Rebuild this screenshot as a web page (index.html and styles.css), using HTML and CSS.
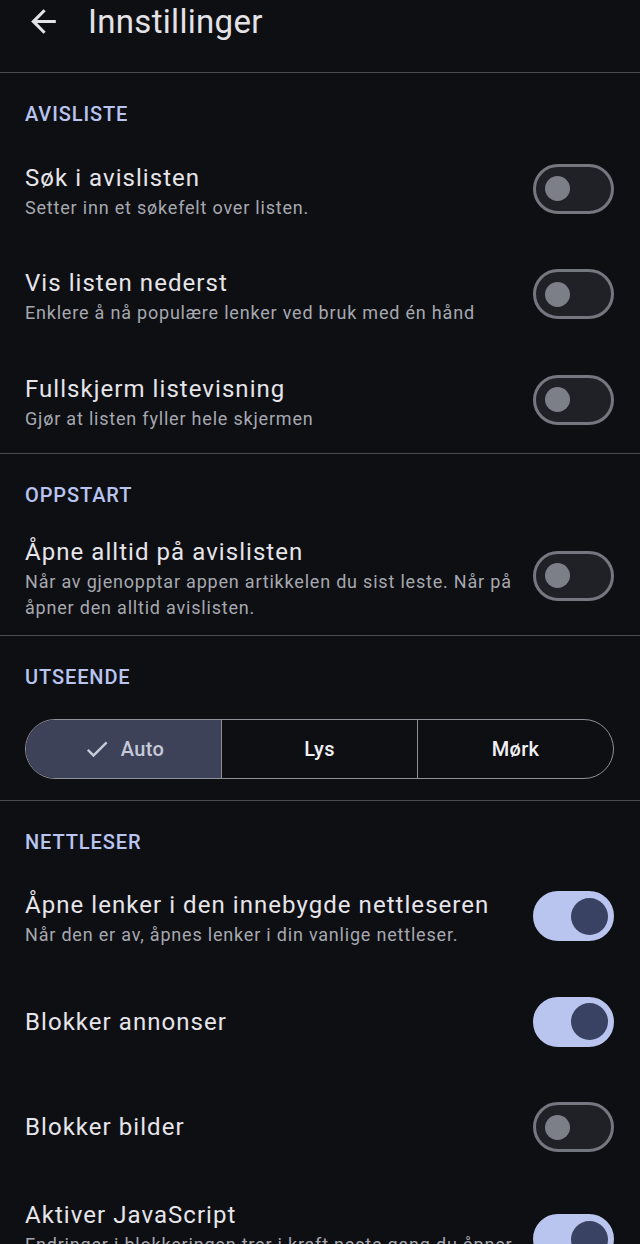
FILE: index.html
```html
<!DOCTYPE html>
<html lang="no">
<head>
<meta charset="utf-8">
<title>Innstillinger</title>
<link rel="stylesheet" href="styles.css">
</head>
<body>
<header class="topbar">
  <svg class="back" viewBox="0 0 24 24" width="37" height="37"><path d="M20 11H7.83l5.59-5.59L12 4l-8 8 8 8 1.41-1.41L7.83 13H20v-2z" fill="#e3e2e6"/></svg>
  <h1 class="title">Innstillinger</h1>
</header>

<section class="section">
  <h2 class="sec-head">AVISLISTE</h2>
  <div class="row">
    <div class="text"><div class="t">Søk i avislisten</div><div class="s">Setter inn et søkefelt over listen.</div></div>
    <span class="switch"><span class="thumb"></span></span>
  </div>
  <div class="row">
    <div class="text"><div class="t">Vis listen nederst</div><div class="s">Enklere å nå populære lenker ved bruk med én hånd</div></div>
    <span class="switch"><span class="thumb"></span></span>
  </div>
  <div class="row">
    <div class="text"><div class="t">Fullskjerm listevisning</div><div class="s">Gjør at listen fyller hele skjermen</div></div>
    <span class="switch"><span class="thumb"></span></span>
  </div>
</section>

<section class="section">
  <h2 class="sec-head">OPPSTART</h2>
  <div class="row">
    <div class="text"><div class="t">Åpne alltid på avislisten</div><div class="s">Når av gjenopptar appen artikkelen du sist leste. Når på åpner den alltid avislisten.</div></div>
    <span class="switch"><span class="thumb"></span></span>
  </div>
</section>

<section class="section">
  <h2 class="sec-head">UTSEENDE</h2>
  <div class="segmented">
    <div class="seg selected"><svg class="check" viewBox="0 0 24 24" width="28" height="28"><path d="M9 16.17L4.83 12l-1.42 1.41L9 19 21 7l-1.41-1.41z" fill="#c6c9d8"/></svg>Auto</div>
    <div class="seg">Lys</div>
    <div class="seg">Mørk</div>
  </div>
</section>

<section class="section last">
  <h2 class="sec-head">NETTLESER</h2>
  <div class="row">
    <div class="text"><div class="t">Åpne lenker i den innebygde nettleseren</div><div class="s">Når den er av, åpnes lenker i din vanlige nettleser.</div></div>
    <span class="switch on"><span class="thumb"></span></span>
  </div>
  <div class="row single">
    <div class="text"><div class="t">Blokker annonser</div></div>
    <span class="switch on"><span class="thumb"></span></span>
  </div>
  <div class="row single">
    <div class="text"><div class="t">Blokker bilder</div></div>
    <span class="switch"><span class="thumb"></span></span>
  </div>
  <div class="row">
    <div class="text"><div class="t">Aktiver JavaScript</div><div class="s">Endringer i blokkeringen trer i kraft neste gang du åpner en artikkel.</div></div>
    <span class="switch on"><span class="thumb"></span></span>
  </div>
</section>
</body>
</html>
```
FILE: styles.css
```css
* { box-sizing: border-box; }
html, body { margin: 0; padding: 0; }
body {
  background: #0e0f13;
  color: #e3e2e6;
  font-family: Roboto, "Noto Sans", sans-serif;
  width: 640px;
  overflow: hidden;
}
.topbar {
  height: 73px;
  display: flex;
  align-items: flex-start;
  padding-left: 25px;
  border-bottom: 1px solid #4a4c51;
}
.back { margin-top: 3px; flex: none; }
.title {
  margin: 0 0 0 26px;
  font-size: 33px;
  font-weight: 400;
  line-height: 44px;
  letter-spacing: 0.3px;
  color: #e3e2e6;
}
.section { border-bottom: 1px solid #4a4c51; }
.section.last { border-bottom: none; }
.sec-head {
  margin: 0;
  padding: 28px 25px 9px;
  font-size: 20px;
  line-height: 26px;
  font-weight: 500;
  letter-spacing: 0.9px;
  color: #b9c4f0;
}
.row {
  min-height: 105.5px;
  display: flex;
  align-items: center;
  padding: 20px 26px 14px 25px;
  gap: 20px;
}
.row.single { padding: 17px 26px 17px 25px; }
.text { flex: 1; min-width: 0; }
.t { font-size: 24px; line-height: 30px; letter-spacing: 1.05px; color: #e6e5ea; }
.s { margin-top: 2px; font-size: 18px; line-height: 26px; letter-spacing: 0.8px; color: #a6a8b0; }
.switch {
  flex: none;
  margin-top: -6px;
  width: 81px;
  height: 50px;
  border-radius: 25px;
  background: #1f2126;
  border: 3px solid #74777f;
  display: flex;
  align-items: center;
  padding-left: 9px;
}
.row.single .switch { margin-top: 0; }
.thumb {
  width: 25px;
  height: 25px;
  border-radius: 50%;
  background: #7c7f88;
}
.switch.on {
  background: #b9c4ef;
  border-color: #b9c4ef;
  justify-content: flex-end;
  padding: 0 3px 0 0;
}
.switch.on .thumb {
  width: 37px;
  height: 37px;
  background: #394263;
}
.segmented {
  margin: 20px 26px 21px 25px;
  height: 60px;
  display: flex;
  border: 1.5px solid #8e9099;
  border-radius: 30px;
  overflow: hidden;
}
.seg {
  flex: 1;
  display: flex;
  align-items: center;
  justify-content: center;
  font-size: 20px;
  font-weight: 500;
  letter-spacing: 0.3px;
  color: #f0f0f4;
}
.seg + .seg { border-left: 1.5px solid #8e9099; }
.seg.selected { background: #3d4259; color: #c6c9d8; }
.check { margin-right: 10px; }
```
